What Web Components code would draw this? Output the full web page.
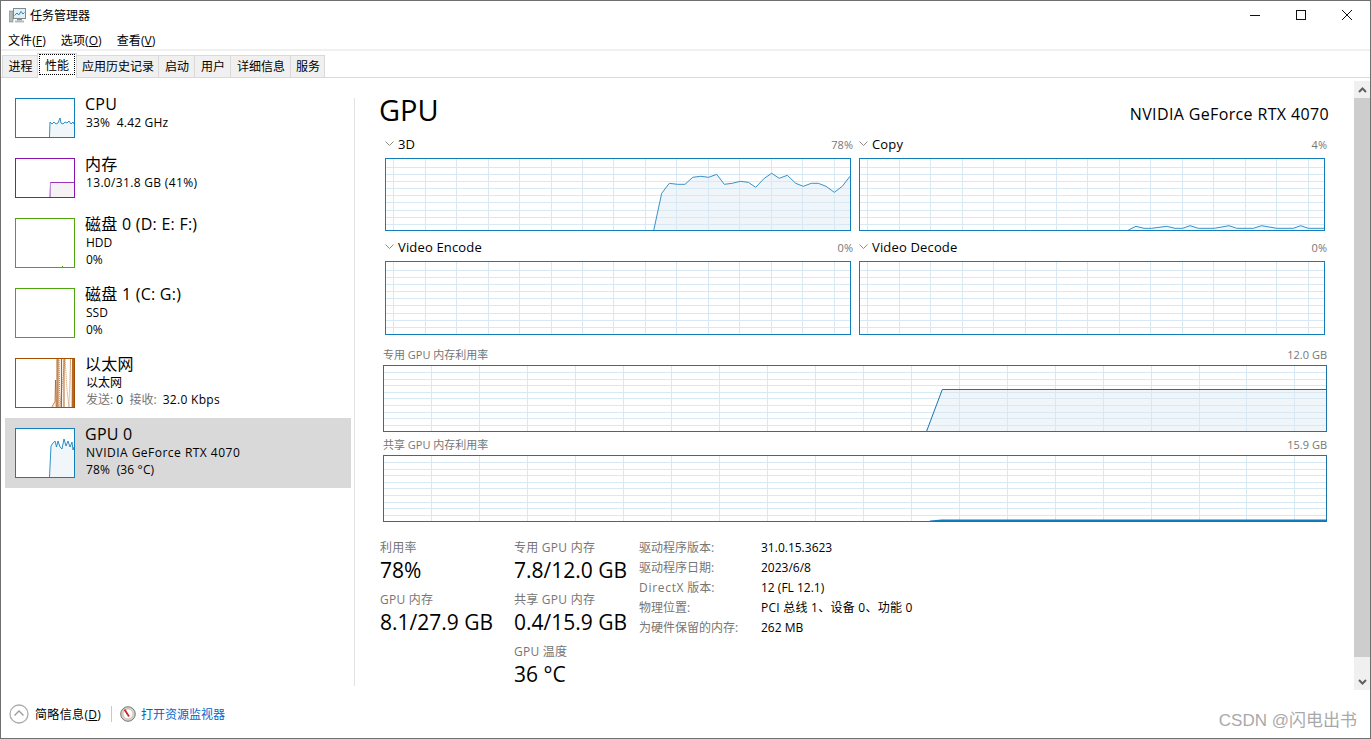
<!DOCTYPE html>
<html lang="zh-CN"><head><meta charset="utf-8"><title>任务管理器</title>
<style>
html,body{margin:0;padding:0;width:1371px;height:739px;overflow:hidden;background:#fff;font-family:"Open Sans","Noto Sans CJK SC",sans-serif;color:#000}
</style></head><body>
<task-window>
  <title-bar slot="title">任务管理器</title-bar>
  <menu-bar slot="menu"></menu-bar>
  <tab-strip slot="tabs"></tab-strip>
  <side-list slot="side">
    <side-item kind="cpu" h="60" name="CPU"><span style="letter-spacing:.18px">33%&nbsp; 4.42 GHz</span></side-item>
    <side-item kind="mem" h="60" name="内存"><span style="letter-spacing:.33px">13.0/31.8 GB (41%)</span></side-item>
    <side-item kind="disk" h="70" name="磁盘 0 (D: E: F:)"><span>HDD</span><span>0%</span></side-item>
    <side-item kind="disk2" h="70" name="磁盘 1 (C: G:)"><span>SSD</span><span>0%</span></side-item>
    <side-item kind="eth" h="70" name="以太网"><span>以太网</span><span><span style="color:#767676">发送:</span> 0&nbsp; <span style="color:#767676">接收:</span> <span style="letter-spacing:.3px;margin-left:3px">32.0 Kbps</span></span></side-item>
    <side-item kind="gpu" h="70" name="GPU 0" selected><span style="letter-spacing:.48px">NVIDIA GeForce RTX 4070</span><span style="letter-spacing:.15px">78%&nbsp; (36 °C)</span></side-item>
  </side-list>
  <gpu-panel slot="main"></gpu-panel>
  <scroll-rail slot="rail"></scroll-rail>
  <foot-bar slot="foot"></foot-bar>
</task-window>
<script>
function shell(el,html){const r=el.attachShadow({mode:'open'});r.innerHTML=html;return r;}

customElements.define('task-window',class extends HTMLElement{constructor(){super();shell(this,`<style>
:host{display:flex;flex-direction:column;box-sizing:border-box;width:1371px;height:739px;border:1px solid #707070;background:#fff;position:relative;overflow:hidden}
.body{display:flex;height:612px}
.div{width:1px;background:#e3e3e3;margin:20px 0 4px 0;flex:none}
.mark{position:absolute;right:13px;bottom:5px;font:17px/24px "Liberation Sans","Noto Sans CJK SC",sans-serif;color:#a9a9a9;white-space:nowrap}
</style><slot name="title"></slot><slot name="menu"></slot><slot name="tabs"></slot>
<div class="body"><slot name="side"></slot><div class="div"></div><slot name="main"></slot><slot name="rail"></slot></div>
<slot name="foot"></slot><div class="mark">CSDN @闪电出书</div>`);}});

customElements.define('title-bar',class extends HTMLElement{constructor(){super();shell(this,`<style>
:host{display:flex;align-items:center;height:28px;flex:none;font-size:12px;padding-left:8px;box-sizing:border-box;position:relative}
.t{margin-left:4px;margin-top:-1px}
.c{margin-left:auto;display:flex}
svg{display:block}
.b{width:46px;height:28px;display:flex;align-items:center;justify-content:center}
</style>
<svg width="17" height="17" viewBox="0 0 17 17"><rect x="0.5" y="4" width="3.5" height="11" fill="#b4b8b8" stroke="#7f8583" stroke-width=".6"/><rect x="4.5" y="1.5" width="12" height="10" fill="#e4eff6" stroke="#7d8a90"/><path d="M5.5 8.5 8 6l1.8 2 2.2-3.5 2 2.5 1.5-1.5" fill="none" stroke="#2f88bb"/><rect x="8" y="12" width="5" height="1.5" fill="#8d9291"/><rect x="6" y="13.5" width="9" height="2" fill="#b8bcbb"/></svg>
<span class="t"><slot></slot></span>
<div class="c">
<div class="b"><svg width="12" height="12" viewBox="0 0 12 12"><path d="M1 6.5h10" stroke="#111" fill="none"/></svg></div>
<div class="b"><svg width="12" height="12" viewBox="0 0 12 12"><rect x="1.5" y="1.5" width="9" height="9" stroke="#111" fill="none"/></svg></div>
<div class="b"><svg width="12" height="12" viewBox="0 0 12 12"><path d="M1 1l10 10M11 1 1 11" stroke="#111" fill="none"/></svg></div>
</div>`);}});

customElements.define('menu-bar',class extends HTMLElement{constructor(){super();shell(this,`<style>
:host{display:flex;align-items:center;height:20px;flex:none;font-size:12px;padding:2px 0 0 7px;gap:15px;box-sizing:border-box}
span{letter-spacing:.1px}
u{text-decoration-thickness:1px;text-underline-offset:1px}
</style><span>文件(<u>F</u>)</span><span>选项(<u>O</u>)</span><span>查看(<u>V</u>)</span>`);}});

customElements.define('tab-strip',class extends HTMLElement{constructor(){super();
const tabs=[['进程',36],['性能',40,1],['应用历史记录',83],['启动',37],['用户',37],['详细信息',61],['服务',35]];
shell(this,`<style>
:host{display:flex;align-items:flex-end;height:29px;flex:none;border-top:2px solid #f0f0f0;border-bottom:1px solid #d9d9d9;box-sizing:border-box;padding-left:2px;font-size:12px}
.t{box-sizing:border-box;height:22px;background:#f0f0f0;border:1px solid #d9d9d9;border-bottom:0;margin-left:-1px;display:flex;align-items:center;justify-content:center;flex:none;padding:0 0 1px 1px}
.t:first-child{margin-left:0}
.t.s{background:#fff;height:25px;margin-bottom:-1px;position:relative;z-index:1;padding:0 0 3px}
.t.s span{outline:1px dotted #000;display:flex;align-items:center;justify-content:center;width:34px;height:19px}
</style>${tabs.map(t=>`<div class="t${t[2]?' s':''}" style="width:${t[1]}px"><span>${t[0]}</span></div>`).join('')}`);}});

customElements.define('side-list',class extends HTMLElement{constructor(){super();shell(this,`<style>
:host{display:flex;flex-direction:column;box-sizing:border-box;width:353px;flex:none;padding:10px 3px 0 4px}
</style><slot></slot>`);}});

const THUMB={
 cpu:{c:'#117dbb',f:'#f1f6fa',h:40,p:'34.5,39 35,24 37,26 39,24 41,26 43,25 45,20 46,25 48,26 50,24 52,25 54,23 56,26 58,24 59,26'},
 mem:{c:'#8b12ae',f:'#f4f2f4',h:40,p:'35,39 35.5,24.5 59,24.5',left:'#c58fd6'},
 disk:{c:'#4da60c',h:50,p:'',tick:1},
 disk2:{c:'#4da60c',h:50,p:''},
 eth:{c:'#a74f01',h:50},
 gpu:{c:'#117dbb',f:'#f1f6fa',h:50,p:'34.5,49 36,18 38,15 40,13 41.5,19 43,13 45,19 47,21 49,11 51,18 53,13 55,19 57,14 58,22 59,19'}
};
customElements.define('side-item',class extends HTMLElement{constructor(){super();
const k=this.getAttribute('kind'),T=THUMB[k],H=+this.getAttribute('h'),sel=this.hasAttribute('selected');
let g='';
if(T.f)g+=`<polygon points="${T.p} 59,${T.h} 34.5,${T.h}" fill="${T.f}"/>`;
if(T.p)g+=`<polyline points="${T.p}" fill="none" stroke="${T.c}" stroke-width="1" opacity=".85"/>`;
if(T.tick)g+=`<rect x="47" y="48" width="1" height="1" fill="${T.c}"/>`;
if(k==='eth'){
 g+=`<polygon points="37,49 39,45 40,44 40.5,22 41,49 42,1 49,1 49,49" fill="#f9f0e8"/>`;
 g+=`<polyline points="37,49 39,45 40,44 40.5,22 41.2,49" fill="none" stroke="${T.c}" stroke-width="1" opacity=".65"/>`;
 g+=`<path d="M42 0V49M43 0V49M46.5 0V49M49 0V49M57.5 0V49M58.5 0V49" stroke="${T.c}" stroke-width="1" opacity=".85"/>`;
 g+=`<polyline points="44,0 45,49 50,0 52,32 54,49 55.5,0 56.5,49" fill="none" stroke="${T.c}" stroke-width="1" stroke-dasharray="1 1" opacity=".65"/>`;
}
if(T.left)g+=`<path d="M35.5 25V39" stroke="${T.left}"/>`;
shell(this,`<style>
:host{display:flex;box-sizing:border-box;height:${H}px;width:346px;flex:none;padding-left:10px;align-items:flex-start;${sel?'background:#d9d9d9;':''}}
svg{display:block;margin-top:10px;flex:none;background:#fff}
.x{margin-left:11px;padding-top:6px;display:flex;flex-direction:column}
.n{font-size:16px;line-height:20px;height:20px;white-space:nowrap;letter-spacing:.25px;margin-left:-1px}
::slotted(span){font-size:12px;line-height:17px;height:17px;white-space:nowrap;display:block}
</style><svg width="60" height="${T.h}" viewBox="0 0 60 ${T.h}">${g}<rect x=".5" y=".5" width="59" height="${T.h-1}" fill="none" stroke="${T.c}"/></svg>
<div class="x"><div class="n">${this.getAttribute('name')}</div><slot></slot></div>`);}});

customElements.define('perf-graph',class extends HTMLElement{constructor(){super();
const [x,y,w,h]=this.getAttribute('box').split(' ').map(Number);
const [v0,vs]=this.getAttribute('v').split(' ').map(Number),[h0,hs]=this.getAttribute('h').split(' ').map(Number);
const bc=this.getAttribute('c')||'#117dbb',lc=this.getAttribute('lc')||'#3a91c7',pts=this.getAttribute('p')||'',sw=this.getAttribute('sw')||'1';
let g='';
if(pts&&this.hasAttribute('fill')){g+=`<polygon points="${pts} ${x+w},${y+h} ${pts.split(' ')[0].split(',')[0]},${y+h}" fill="#f0f5f9"/>`;}
let ln='';
for(let a=v0;a<x+w-1;a+=vs){const q=Math.round(a)+.5;ln+=`M${q} ${y}V${y+h}`;}
for(let b=h0;b<y+h-1;b+=hs){const q=Math.round(b)+.5;ln+=`M${x} ${q}H${x+w}`;}
g+=`<path d="${ln}" stroke="#d9e9f3" fill="none" shape-rendering="crispEdges"/>`;
if(pts)g+=`<polyline points="${pts}" fill="none" stroke="${lc}" stroke-width="${sw}"/>`;
g+=`<rect x="${x+.5}" y="${y+.5}" width="${w-1}" height="${h-1}" fill="none" stroke="${bc}" shape-rendering="crispEdges"/>`;
shell(this,`<style>:host{display:block;width:${w}px;height:${h}px}svg{display:block}</style><svg width="${w}" height="${h}" viewBox="${x} ${y} ${w} ${h}">${g}</svg>`);}});

customElements.define('graph-cell',class extends HTMLElement{constructor(){super();shell(this,`<style>
:host{display:block;width:466px}
.h{display:flex;align-items:center;height:18px;margin-bottom:5px;font-size:13px}
svg{flex:none;margin:0 4px 0 0;display:block}
.l{letter-spacing:.16px}
.v{margin-left:auto;font-size:11px;color:#767676;margin-right:-2px}
</style><div class="h"><svg width="9" height="6" viewBox="0 0 9 6"><path d="M.5.5 4.5 4.5 8.5.5" fill="none" stroke="#8a8a8a"/></svg><span class="l">${this.getAttribute('label')}</span><span class="v">${this.getAttribute('val')}</span></div><slot></slot>`);}});

customElements.define('wide-cell',class extends HTMLElement{constructor(){super();shell(this,`<style>
:host{display:block;width:944px}
.h{display:flex;align-items:center;height:18px;margin-bottom:2px;font-size:11px;color:#767676}
.v{margin-left:auto}
</style><div class="h"><span>${this.getAttribute('label')}</span><span class="v">${this.getAttribute('val')}</span></div><slot></slot>`);}});

customElements.define('stat-block',class extends HTMLElement{constructor(){super();shell(this,`<style>
:host{display:block;height:52px}
.l{font-size:12px;line-height:18px;color:#767676;white-space:nowrap;letter-spacing:.25px}
.v{font-size:21px;line-height:26px;white-space:nowrap}
</style><div class="l">${this.getAttribute('label')}</div><div class="v">${this.getAttribute('val')}</div>`);}});

customElements.define('gpu-panel',class extends HTMLElement{constructor(){super();
const d3='653.7,230.5 661.7,193.3 669.3,183.3 677.3,184.3 685,184.3 692.7,177.3 700.7,176.3 708.7,177.3 716.7,174.3 724.3,184.3 732.3,183.3 740.3,181.3 748.3,182.3 755.7,187.3 764.3,178.3 771.7,173.3 779.3,178.3 787.3,175.3 795.7,183.3 803.3,186.3 811.3,183.3 818.3,183.3 826,186.3 834.3,192.3 842.3,186.3 850,176.3';
const cp='1128.3,230 1136,226.3 1144,228.3 1151.7,228.3 1166.7,226.3 1175,228.3 1182.7,228.3 1190,225.7 1198.3,228.3 1214.3,228.3 1229,225.7 1236.7,228.3 1253.3,228.3 1261.7,225.7 1276.7,228.3 1293.3,228.3 1300.7,225.7 1308.3,228.3 1325,228.3';
const rows=[['驱动程序版本:','31.0.15.3623'],['驱动程序日期:','2023/6/8'],['<span style="letter-spacing:.7px">DirectX</span> 版本:','12 (FL 12.1)'],['物理位置:','<span style="letter-spacing:.25px">PCI 总线 1、设备 0、功能 0</span>'],['为硬件保留的内存:','262 MB']];
shell(this,`<style>
:host{display:block;box-sizing:border-box;width:999px;flex:none;padding:13px 0 0 25px;position:relative}
.top{display:flex;align-items:center;height:38px;width:949px;margin-bottom:6px}
.g{font-size:29px;line-height:38px;margin-left:-1px}
.d{margin-left:auto;font-size:16px;padding-top:8px;letter-spacing:.36px}
.row{display:flex;gap:8px;margin-left:5px}
.row+.row{margin-top:7px}
.wide{margin:10px 0 0 3px}
.wide+.wide{margin-top:3px}
.stats{display:flex;margin:17px 0 0 0}
.c1{width:134px}.c2{width:125px}
.info{display:grid;grid-template-columns:122px auto;grid-auto-rows:20px;font-size:12px;line-height:18px;white-space:nowrap;align-content:start}
.info .k{color:#767676}
</style>
<div class="top"><span class="g">GPU</span><span class="d">NVIDIA GeForce RTX 4070</span></div>
<div class="row">
<graph-cell label="3D" val="78%"><perf-graph box="385 158 466 73" v="393.3 31.45" h="166.5 7.2" fill p="${d3}"></perf-graph></graph-cell>
<graph-cell label="Copy" val="4%"><perf-graph box="859 158 466 73" v="867.3 31.45" h="166.5 7.2" fill p="${cp}"></perf-graph></graph-cell>
</div>
<div class="row">
<graph-cell label="Video Encode" val="0%"><perf-graph box="385 261 466 74" v="393.3 31.45" h="269.5 7.2"></perf-graph></graph-cell>
<graph-cell label="Video Decode" val="0%"><perf-graph box="859 261 466 74" v="867.3 31.45" h="269.5 7.2"></perf-graph></graph-cell>
</div>
<div class="wide"><wide-cell label="专用 GPU 内存利用率" val="12.0 GB"><perf-graph box="383 365 944 67" v="431 47.97" h="372 6.62" c="#1b75ab" lc="#1b75ab" fill p="926.7,431 942.3,389.5 1326.5,389.5"></perf-graph></wide-cell></div>
<div class="wide"><wide-cell label="共享 GPU 内存利用率" val="15.9 GB"><perf-graph box="383 455 944 67" v="431 47.97" h="462 6.62" c="#1b75ab" lc="#117dbb" sw="2" p="930,521.5 942,520.5 1326,520.5"></perf-graph></wide-cell></div>
<div class="stats">
<div class="c1"><stat-block label="利用率" val="78%"></stat-block><stat-block label="GPU 内存" val="8.1/27.9 GB"></stat-block></div>
<div class="c2"><stat-block label="专用 GPU 内存" val="7.8/12.0 GB"></stat-block><stat-block label="共享 GPU 内存" val="0.4/15.9 GB"></stat-block><stat-block label="GPU 温度" val="36 °C"></stat-block></div>
<div class="info">${rows.map(r=>`<span class="k">${r[0]}</span><span>${r[1]}</span>`).join('')}</div>
</div>`);}});

customElements.define('scroll-rail',class extends HTMLElement{constructor(){super();shell(this,`<style>
:host{display:flex;flex-direction:column;width:16px;flex:none;background:#f0f0f0;margin-top:3px}
.a{height:17px;display:flex;align-items:center;justify-content:center;flex:none}
.th{height:559px;background:#cdcdcd;flex:none}
.sp{flex:1}
svg{display:block}
</style><div class="a"><svg width="9" height="6" viewBox="0 0 9 6"><path d="M1 5 4.5 1.5 8 5" fill="none" stroke="#606060" stroke-width="2"/></svg></div><div class="th"></div><div class="sp"></div><div class="a"><svg width="9" height="6" viewBox="0 0 9 6"><path d="M1 1 4.5 4.5 8 1" fill="none" stroke="#606060" stroke-width="2"/></svg></div>`);}});

customElements.define('foot-bar',class extends HTMLElement{constructor(){super();shell(this,`<style>
:host{display:flex;align-items:center;height:48px;flex:none;padding:0 0 1px 8px;font-size:12px;box-sizing:border-box}
svg{display:block;flex:none}
.n{margin-left:6px;width:68px;white-space:nowrap;letter-spacing:.35px}
.s{width:1px;height:16px;background:#c8c8c8;margin:0 8px}
a{color:#0066cc;text-decoration:none;margin-left:5px}
u{text-decoration-thickness:1px;text-underline-offset:1px}
</style>
<svg width="20" height="20" viewBox="0 0 20 20"><circle cx="10" cy="10" r="9" fill="#fff" stroke="#ababab" stroke-width="1.3"/><path d="M5.5 11.5 10 7l4.5 4.5" fill="none" stroke="#9a9a9a" stroke-width="1.3"/></svg>
<span class="n">简略信息(<u>D</u>)</span><div class="s"></div>
<svg width="16" height="16" viewBox="0 0 16 16"><circle cx="8" cy="8" r="7.3" fill="#d7d4cc" stroke="#77766f" stroke-width="1"/><circle cx="8" cy="8" r="5" fill="#fff" stroke="#b6b3ab" stroke-width=".7"/><path d="M4.5 3.5 9 10.5" stroke="#c8242a" stroke-width="1.8"/></svg>
<a>打开资源监视器</a>`);}});
</script>
</body></html>
